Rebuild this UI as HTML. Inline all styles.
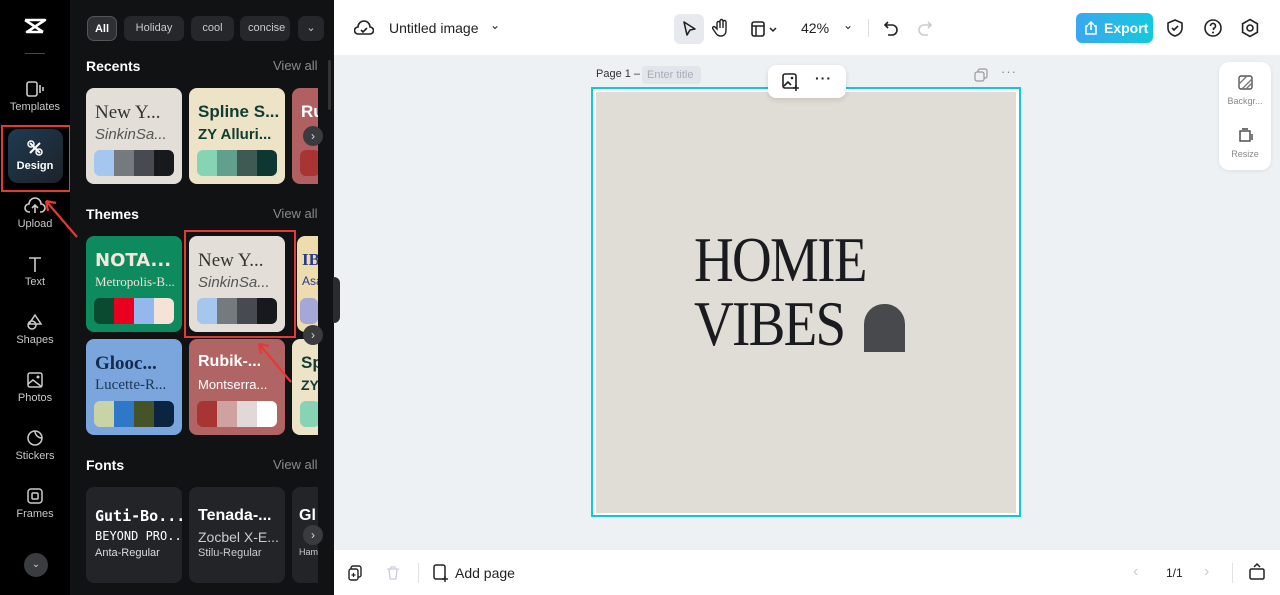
<!DOCTYPE html>
<html><head><meta charset="utf-8"><style>
*{margin:0;padding:0;box-sizing:border-box}
body{width:1280px;height:595px;overflow:hidden;position:relative;font-family:"Liberation Sans",sans-serif;background:#eef1f4}
.a{position:absolute}
.nav{left:0;top:0;width:70px;height:595px;background:#000}
.panel{left:70px;top:0;width:264px;height:595px;background:#111214}
.ni{position:absolute;left:0;width:70px;text-align:center;color:#c8c8c8;font-size:11px}
.ni svg{display:block;margin:0 auto 3px}
.chip{position:absolute;top:16px;height:25px;border-radius:7px;background:#26272b;color:#c9c9c9;font-size:11px;line-height:25px;text-align:center}
.h{position:absolute;left:86px;color:#fff;font-weight:bold;font-size:14px}
.va{position:absolute;left:273px;color:#8a8a8a;font-size:13px}
.card{position:absolute;width:96px;height:96px;border-radius:8px;overflow:hidden}
.card .t{position:absolute;left:9px;top:14px;font-size:19px;white-space:nowrap}
.card .s{position:absolute;left:9px;top:38px;font-size:14px;white-space:nowrap}
.pal{position:absolute;left:8px;top:62px;width:80px;height:26px;border-radius:6px;overflow:hidden;display:flex}
.pal i{flex:1}
.arr{position:absolute;width:20px;height:20px;border-radius:50%;background:#3a3b3f;color:#ddd;font-size:12px;line-height:20px;text-align:center}
.top{left:334px;top:0;width:946px;height:55px;background:#fff}
.bot{left:334px;top:550px;width:946px;height:45px;background:#fff}
</style></head><body>
<div class="a nav">
 <svg class="a" style="left:23px;top:18px" width="24" height="16" viewBox="0 0 24 16"><path d="M2 2 L22 2 L4 14 L20 14 M2 2 L20 14 M22 2 L4 14" stroke="#fff" stroke-width="2.6" fill="none" stroke-linejoin="round"/></svg>
 <div class="a" style="left:25px;top:53px;width:20px;height:1px;background:#444"></div>
 <div class="ni" style="top:80px"><svg width="20" height="18"><rect x="2" y="2" width="10" height="14" rx="2" stroke="#ccc" stroke-width="1.6" fill="none"/><path d="M15 5v8M18 7v4" stroke="#ccc" stroke-width="1.6"/></svg>Templates</div>
 <div class="a" style="left:1px;top:125px;width:70px;height:67px;border:2px solid #e53935"></div>
 <div class="a" style="left:8px;top:129px;width:55px;height:54px;border-radius:10px;background:linear-gradient(135deg,#1f3a52,#1d2228)"></div>
 <div class="ni" style="top:139px;color:#fff;font-weight:bold"><svg width="18" height="18"><path d="M4 4l10 10M14 4L4 14" stroke="#fff" stroke-width="2"/><circle cx="5" cy="5" r="3" stroke="#fff" stroke-width="1.5" fill="none"/><circle cx="13" cy="13" r="3" stroke="#fff" stroke-width="1.5" fill="none"/></svg>Design</div>
 <div class="ni" style="top:197px"><svg width="22" height="18"><path d="M6 15H5a4 4 0 0 1 0-8 6 6 0 0 1 12 0 4 4 0 0 1 0 8h-1M11 16V9M8 11l3-3 3 3" stroke="#ccc" stroke-width="1.6" fill="none"/></svg>Upload</div>
 <div class="ni" style="top:255px"><svg width="18" height="18"><path d="M3 3h12M9 3v14" stroke="#ccc" stroke-width="1.6"/></svg>Text</div>
 <div class="ni" style="top:313px"><svg width="18" height="18"><path d="M9 2l6 9H3z" stroke="#ccc" stroke-width="1.5" fill="none"/><circle cx="6" cy="12" r="4" stroke="#ccc" stroke-width="1.5" fill="none"/></svg>Shapes</div>
 <div class="ni" style="top:371px"><svg width="18" height="18"><rect x="2" y="2" width="14" height="14" rx="2" stroke="#ccc" stroke-width="1.5" fill="none"/><path d="M2 13l5-4 9 7" stroke="#ccc" stroke-width="1.5" fill="none"/><circle cx="12" cy="6" r="1.5" fill="#ccc"/></svg>Photos</div>
 <div class="ni" style="top:429px"><svg width="18" height="18"><circle cx="9" cy="9" r="7" stroke="#ccc" stroke-width="1.5" fill="none"/><path d="M9 2a7 7 0 0 0 7 7" stroke="#ccc" stroke-width="1.5" fill="none"/></svg>Stickers</div>
 <div class="ni" style="top:487px"><svg width="18" height="18"><rect x="2" y="2" width="14" height="14" rx="3" stroke="#ccc" stroke-width="1.5" fill="none"/><rect x="6" y="6" width="6" height="6" rx="1" stroke="#ccc" stroke-width="1.5" fill="none"/></svg>Frames</div>
 <div class="a" style="left:24px;top:553px;width:24px;height:24px;border-radius:50%;background:#3b3c40;color:#ccc;font-size:10px;text-align:center;line-height:24px">⌄</div>
</div>
<div class="a panel"></div>
<div class="chip" style="left:87px;width:30px;background:#2f3034;color:#fff;border:1px solid #555;font-weight:bold">All</div>
<div class="chip" style="left:124px;width:60px">Holiday</div>
<div class="chip" style="left:191px;width:43px">cool</div>
<div class="chip" style="left:240px;width:50px;text-align:left;padding-left:8px;overflow:hidden">concise</div>
<div class="chip" style="left:298px;width:26px">⌄</div>
<div class="h" style="top:58px">Recents</div><div class="va" style="top:58px">View all</div>
<div class="h" style="top:206px">Themes</div><div class="va" style="top:206px">View all</div>
<div class="h" style="top:457px">Fonts</div><div class="va" style="top:457px">View all</div>

<div class="card" style="left:86px;top:88px;background:#e3dfd8"><div class="t" style="font-family:'Liberation Serif';color:#333">New Y...</div><div class="s" style="font-style:italic;color:#555;font-size:15px">SinkinSa...</div><div class="pal"><i style="background:#a4c6ef"></i><i style="background:#757a7e"></i><i style="background:#474a51"></i><i style="background:#17191d"></i></div></div>
<div class="card" style="left:189px;top:88px;background:#ede4c8"><div class="t" style="font-weight:bold;color:#123c31;font-size:17px">Spline S...</div><div class="s" style="font-weight:bold;color:#123c31;font-size:15px">ZY Alluri...</div><div class="pal"><i style="background:#86d4b3"></i><i style="background:#62a08e"></i><i style="background:#3f5a52"></i><i style="background:#0e3731"></i></div></div>
<div class="card" style="left:292px;top:88px;width:26px;border-radius:8px 0 0 8px;background:#b06060"><div class="t" style="color:#fff;font-weight:bold;font-size:17px">Ru</div><div class="pal" style="width:20px;background:#a83434"></div></div>

<div class="card" style="left:86px;top:236px;background:#0d8a5e"><div class="t" style="color:#f6e6dc;font-weight:900;font-size:18px;font-family:'DejaVu Sans'">NOTA...</div><div class="s" style="font-family:'Liberation Serif';color:#f2e2d8;font-size:13px">Metropolis-B...</div><div class="pal"><i style="background:#0a4a30"></i><i style="background:#e8001e"></i><i style="background:#96b6ee"></i><i style="background:#f5e3d8"></i></div></div>
<div class="card" style="left:189px;top:236px;background:#e3dfd8"><div class="t" style="font-family:'Liberation Serif';color:#333">New Y...</div><div class="s" style="font-style:italic;color:#555;font-size:15px">SinkinSa...</div><div class="pal"><i style="background:#a4c6ef"></i><i style="background:#757a7e"></i><i style="background:#474a51"></i><i style="background:#17191d"></i></div></div>
<div class="a" style="left:184px;top:230px;width:112px;height:108px;border:2px solid #e53935"></div>
<div class="card" style="left:297px;top:236px;width:21px;border-radius:8px 0 0 8px;background:#ecdcae"><div class="t" style="left:5px;color:#2c3a8a;font-weight:bold;font-size:17px;font-family:'Liberation Serif'">IB</div><div class="s" style="left:5px;color:#2c3a8a;font-size:12px">Asa</div><div class="pal" style="left:3px;width:18px;background:#a4a7d8"></div></div>

<div class="card" style="left:86px;top:339px;background:#7ba6dd"><div class="t" style="font-family:'Liberation Serif';color:#112c4e;font-weight:bold">Glooc...</div><div class="s" style="font-family:'Liberation Serif';color:#1d3656;font-size:15px">Lucette-R...</div><div class="pal"><i style="background:#c8d4a6"></i><i style="background:#2f78c8"></i><i style="background:#455428"></i><i style="background:#0b2540"></i></div></div>
<div class="card" style="left:189px;top:339px;background:#b06464"><div class="t" style="color:#fff;font-weight:bold;font-size:16px">Rubik-...</div><div class="s" style="color:#fff;font-size:13px">Montserra...</div><div class="pal"><i style="background:#a83434"></i><i style="background:#cfa2a2"></i><i style="background:#e3d8d8"></i><i style="background:#fff"></i></div></div>
<div class="card" style="left:292px;top:339px;width:26px;border-radius:8px 0 0 8px;background:#ede4c8"><div class="t" style="color:#123c31;font-weight:bold;font-size:17px">Sp</div><div class="s" style="color:#123c31;font-weight:bold;font-size:14px">ZY</div><div class="pal" style="width:20px;background:#86d4b3"></div></div>

<div class="card" style="left:86px;top:487px;background:#232428"><div class="t" style="top:20px;color:#fff;font-family:'DejaVu Sans Mono';font-weight:bold;font-size:15px">Guti-Bo...</div><div class="s" style="top:42px;color:#fff;font-family:'DejaVu Sans Mono';font-size:12px">BEYOND PRO...</div><div class="s" style="top:60px;color:#ddd;font-size:11px">Anta-Regular</div></div>
<div class="card" style="left:189px;top:487px;background:#232428"><div class="t" style="top:20px;color:#fff;font-weight:bold;font-size:16px">Tenada-...</div><div class="s" style="top:42px;color:#ccc;font-size:14px">Zocbel X-E...</div><div class="s" style="top:60px;color:#ccc;font-size:11px">Stilu-Regular</div></div>
<div class="card" style="left:292px;top:487px;width:26px;border-radius:8px 0 0 8px;background:#232428"><div class="t" style="top:20px;left:7px;color:#fff;font-weight:bold;font-size:16px">Gl</div><div class="s" style="top:60px;left:7px;color:#ccc;font-size:9px">Ham</div></div>
<div class="arr" style="left:303px;top:126px">›</div>
<div class="arr" style="left:303px;top:325px">›</div>
<div class="arr" style="left:303px;top:525px">›</div>
<div class="a" style="left:328px;top:60px;width:3px;height:50px;border-radius:2px;background:#333"></div>
<div class="a" style="left:333px;top:277px;width:7px;height:46px;border-radius:0 6px 6px 0;background:#2a2b2e"></div>
<svg class="a" style="left:40px;top:195px" width="40" height="45"><path d="M37 42L6 6M6 6l2 10M6 6l10 2" stroke="#e53935" stroke-width="2.2" fill="none"/></svg>
<svg class="a" style="left:255px;top:340px" width="40" height="45"><path d="M36 42L4 4M4 4l2 10M4 4l10 2" stroke="#e53935" stroke-width="2.2" fill="none"/></svg>

<div class="a top"></div>
<svg class="a" style="left:354px;top:19px" width="20" height="18"><path d="M5 15H4a3.5 3.5 0 0 1 0-7 6 6 0 0 1 12 0 3.5 3.5 0 0 1 0 7H5zM7 11l2 2 4-4" stroke="#222" stroke-width="1.6" fill="none"/></svg>
<div class="a" style="left:389px;top:20px;font-size:14px;color:#222">Untitled image</div>
<div class="a" style="left:490px;top:18px;font-size:12px;color:#222">⌄</div>
<div class="a" style="left:674px;top:14px;width:30px;height:30px;border-radius:6px;background:#e6e9ee"></div>
<svg class="a" style="left:681px;top:20px" width="16" height="18"><path d="M3 2l11 7-5 1-3 5z" stroke="#222" stroke-width="1.6" fill="none" stroke-linejoin="round"/></svg>
<svg class="a" style="left:712px;top:18px" width="18" height="20"><path d="M5 11V5a1.5 1.5 0 0 1 3 0v5V3a1.5 1.5 0 0 1 3 0v7V4a1.5 1.5 0 0 1 3 0v8c0 4-2 6-5 6s-4-1-6-4l-2-3a1.4 1.4 0 0 1 2-2z" stroke="#222" stroke-width="1.4" fill="none"/></svg>
<svg class="a" style="left:750px;top:20px" width="30" height="18"><rect x="2" y="2" width="12" height="14" rx="2" stroke="#222" stroke-width="1.6" fill="none"/><path d="M2 6h12M6 6v10M20 8l3 3 3-3" stroke="#222" stroke-width="1.5" fill="none"/></svg>
<div class="a" style="left:801px;top:20px;font-size:14px;color:#222">42%</div>
<div class="a" style="left:843px;top:18px;font-size:12px;color:#222">⌄</div>
<div class="a" style="left:868px;top:19px;width:1px;height:18px;background:#ddd"></div>
<svg class="a" style="left:883px;top:19px" width="16" height="18"><path d="M5 3L2 6l3 3M2 6h7a5 5 0 0 1 0 10H5" stroke="#222" stroke-width="1.6" fill="none"/></svg>
<svg class="a" style="left:917px;top:19px" width="16" height="18"><path d="M11 3l3 3-3 3M14 6H7a5 5 0 0 0 0 10h4" stroke="#ccc" stroke-width="1.6" fill="none"/></svg>
<div class="a" style="left:1076px;top:13px;width:77px;height:30px;border-radius:6px;background:linear-gradient(90deg,#3aa7f0,#14c9dd);color:#fff;font-weight:bold;font-size:14px;line-height:30px;padding-left:28px">Export</div>
<svg class="a" style="left:1084px;top:20px" width="14" height="16"><path d="M4 6H2v8h10V6h-2M7 10V2M4 5l3-3 3 3" stroke="#fff" stroke-width="1.5" fill="none"/></svg>
<svg class="a" style="left:1165px;top:18px" width="20" height="20"><path d="M10 2l7 3v5c0 4-3 7-7 8-4-1-7-4-7-8V5z M7 10l2 2 4-4" stroke="#222" stroke-width="1.6" fill="none"/></svg>
<svg class="a" style="left:1203px;top:18px" width="20" height="20"><circle cx="10" cy="10" r="8" stroke="#222" stroke-width="1.6" fill="none"/><path d="M7.5 8a2.5 2.5 0 1 1 3 2.4v1.6" stroke="#222" stroke-width="1.6" fill="none"/><circle cx="10" cy="14.5" r="1" fill="#222"/></svg>
<svg class="a" style="left:1240px;top:18px" width="20" height="20"><path d="M10 1.5l7.4 4.25v8.5L10 18.5 2.6 14.25v-8.5z" stroke="#222" stroke-width="1.6" fill="none"/><circle cx="10" cy="10" r="3" stroke="#222" stroke-width="1.6" fill="none"/></svg>

<div class="a" style="left:596px;top:68px;font-size:11px;color:#333">Page 1 –</div>
<div class="a" style="left:642px;top:66px;width:59px;height:18px;border-radius:4px;background:#e2e6ea;font-size:11px;color:#aab;line-height:18px;padding-left:5px">Enter title</div>
<svg class="a" style="left:974px;top:68px" width="14" height="14"><rect x="4" y="1" width="9" height="9" rx="2" stroke="#999" stroke-width="1.2" fill="none"/><rect x="1" y="4" width="9" height="9" rx="2" stroke="#999" stroke-width="1.2" fill="#eef1f4"/></svg>
<div class="a" style="left:1001px;top:64px;font-size:13px;color:#888;letter-spacing:1px">···</div>
<div class="a" style="left:591px;top:87px;width:430px;height:430px;border:2px solid #13c6dc;background:#fff"></div>
<div class="a" style="left:596px;top:92px;width:420px;height:421px;background:#e0dcd6"></div>
<div class="a" style="left:768px;top:65px;width:78px;height:33px;border-radius:8px;background:#fff;box-shadow:0 2px 6px rgba(0,0,0,.12)"></div>
<svg class="a" style="left:781px;top:72px" width="20" height="20"><rect x="2" y="2" width="13" height="14" rx="2" stroke="#222" stroke-width="1.6" fill="none"/><path d="M3 14l4-4 3 3M15 13v6M12 16h6" stroke="#222" stroke-width="1.6" fill="none"/><circle cx="11" cy="6" r="1.3" fill="#222"/></svg>
<div class="a" style="left:815px;top:70px;font-size:14px;color:#222;font-weight:bold;letter-spacing:1px">···</div>
<div class="a" style="left:694px;top:228px;font-family:'Liberation Serif',serif;font-size:64px;color:#1a1b1e;letter-spacing:-2px;line-height:64px;transform:scaleX(.86);transform-origin:left">HOMIE</div>
<div class="a" style="left:694px;top:292px;font-family:'Liberation Serif',serif;font-size:64px;color:#1a1b1e;letter-spacing:-2px;line-height:64px;transform:scaleX(.86);transform-origin:left">VIBES</div>
<div class="a" style="left:864px;top:304px;width:41px;height:48px;background:#48494d;border-radius:20px 20px 0 0"></div>

<div class="a" style="left:1219px;top:62px;width:52px;height:108px;border-radius:10px;background:#fff;box-shadow:0 1px 4px rgba(0,0,0,.08)"></div>
<svg class="a" style="left:1238px;top:75px" width="15" height="15"><rect x="1" y="1" width="13" height="13" rx="2" stroke="#555" stroke-width="1.4" fill="none"/><path d="M1 9l8-8M4 14l10-10M8 14l6-6" stroke="#777" stroke-width="1.3"/></svg>
<div class="a" style="left:1219px;top:96px;width:52px;text-align:center;font-size:9px;color:#888">Backgr...</div>
<svg class="a" style="left:1238px;top:128px" width="15" height="15"><rect x="2" y="3" width="10" height="10" stroke="#444" stroke-width="1.4" fill="none"/><path d="M4 1h6M14 6v6" stroke="#444" stroke-width="1.4"/></svg>
<div class="a" style="left:1219px;top:149px;width:52px;text-align:center;font-size:9px;color:#888">Resize</div>

<div class="a bot"></div>
<svg class="a" style="left:347px;top:565px" width="16" height="16"><rect x="4" y="1" width="10" height="11" rx="2" stroke="#222" stroke-width="1.4" fill="none"/><rect x="2" y="4" width="9" height="11" rx="2" stroke="#222" stroke-width="1.4" fill="#fff"/><path d="M6.5 8v4M4.5 10h4" stroke="#222" stroke-width="1.2"/></svg>
<svg class="a" style="left:386px;top:565px" width="14" height="16"><path d="M1 4h12M5 4V2h4v2M3 4l1 10h6l1-10" stroke="#ccd" stroke-width="1.3" fill="none"/></svg>
<div class="a" style="left:418px;top:563px;width:1px;height:20px;background:#e2e2e2"></div>
<svg class="a" style="left:432px;top:564px" width="18" height="18"><rect x="2" y="1" width="11" height="14" rx="2" stroke="#222" stroke-width="1.5" fill="none"/><path d="M13 12v6M10 15h6" stroke="#222" stroke-width="1.5"/></svg>
<div class="a" style="left:455px;top:565px;font-size:14px;color:#222">Add page</div>
<div class="a" style="left:1133px;top:563px;font-size:16px;color:#ccc">‹</div>
<div class="a" style="left:1166px;top:566px;font-size:12px;color:#222">1/1</div>
<div class="a" style="left:1204px;top:563px;font-size:16px;color:#ccc">›</div>
<div class="a" style="left:1232px;top:563px;width:1px;height:20px;background:#e2e2e2"></div>
<svg class="a" style="left:1248px;top:562px" width="18" height="18"><rect x="2" y="7" width="14" height="10" rx="1.5" stroke="#222" stroke-width="1.5" fill="none"/><path d="M6 5l3-3 3 3" stroke="#222" stroke-width="1.5" fill="none"/></svg>
</body></html>
